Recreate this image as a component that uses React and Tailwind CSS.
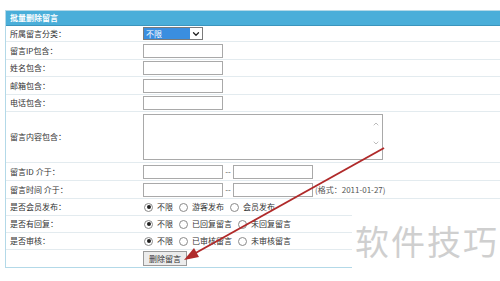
import { ChevronDown, ChevronUp } from "lucide-react";

const rows = [
  { label: "所属留言分类：", h: "h-[16px]", kind: "select" },
  { label: "留言IP包含：", h: "h-[18px]", kind: "input" },
  { label: "姓名包含：", h: "h-[17px]", kind: "input" },
  { label: "邮箱包含：", h: "h-[18px]", kind: "input" },
  { label: "电话包含：", h: "h-[17px]", kind: "input" },
  { label: "留言内容包含：", h: "h-[51px]", kind: "textarea" },
  { label: "留言ID 介于：", h: "h-[18px]", kind: "range" },
  { label: "留言时间 介于：", h: "h-[18px]", kind: "date" },
  { label: "是否会员发布：", h: "h-[17px]", kind: "radio", opts: ["不限", "游客发布", "会员发布"] },
  { label: "是否有回复：", h: "h-[17px]", kind: "radio", opts: ["不限", "已回复留言", "未回复留言"] },
  { label: "是否审核：", h: "h-[17px]", kind: "radio", opts: ["不限", "已审核留言", "未审核留言"] },
];

function Box({ w = "w-[80px]" }) {
  return <div className={`${w} h-[14px] border border-[#a9a9a9] bg-white`} />;
}

function Radio({ on }) {
  return (
    <span className="w-[9px] h-[9px] rounded-full border border-[#8a8a8a] bg-white flex items-center justify-center">
      {on && <span className="w-[4px] h-[4px] rounded-full bg-[#222]" />}
    </span>
  );
}

function Field({ row }) {
  switch (row.kind) {
    case "select":
      return (
        <div className="flex w-[60px] h-[13px] border border-[#7a7a7a] bg-white">
          <div className="flex-1 bg-[#3a8ee0] text-white text-[8px] leading-[11px] pl-[2px]">不限</div>
          <div className="w-[12px] flex items-center justify-center">
            <ChevronDown size={10} strokeWidth={3} color="#222" />
          </div>
        </div>
      );
    case "input":
      return <Box />;
    case "textarea":
      return (
        <div className="relative w-[240px] h-[46px] border border-[#a9a9a9] bg-white">
          <div className="absolute right-[2px] top-[5px] flex flex-col gap-[11px] text-[#9a9a9a]">
            <ChevronUp size={8} strokeWidth={2} />
            <ChevronDown size={8} strokeWidth={2} />
          </div>
        </div>
      );
    case "range":
    case "date":
      return (
        <div className="flex items-center">
          <Box />
          <span className="w-[10px] text-center text-[8px] text-[#555]">--</span>
          <Box />
          {row.kind === "date" && (
            <span className="ml-[2px] text-[8px] text-[#555]">(格式：2011-01-27)</span>
          )}
        </div>
      );
    case "radio":
      return (
        <div className="flex items-center pl-[1px] text-[8px] text-[#333]">
          {row.opts.map((o, i) => (
            <span key={o} className="flex items-center gap-[4px] mr-[6px]">
              <Radio on={i === 0} />
              <span>{o}</span>
            </span>
          ))}
        </div>
      );
    default:
      return null;
  }
}

export default function App() {
  return (
    <div
      className="relative w-[500px] h-[281px] overflow-hidden bg-white pt-[10px] pl-[5px]"
      style={{ fontFamily: '"Noto Sans CJK SC", "Noto Sans", sans-serif' }}
    >
      <div className="border-l border-t border-b border-[#b3d9e8] w-[510px]">
        <div className="h-[15px] bg-[#4aaed9] border-b border-[#3b95bd] text-white text-[8px] font-bold leading-[14px] pl-[4px]">
          批量删除留言
        </div>
        {rows.map((r) => (
          <div key={r.label} className={`flex items-center ${r.h} border-b border-[#e3ebef]`}>
            <div className="w-[137px] pl-[4px] text-[8px] text-[#333]">{r.label}</div>
            <Field row={r} />
          </div>
        ))}
        <div className="flex items-center h-[17px]">
          <div className="w-[137px]" />
          <button className="w-[44px] h-[15px] border border-[#9a9a9a] bg-[#ececec] text-[8px] text-[#333] leading-[13px]">
            删除留言
          </button>
        </div>
      </div>

      <div className="absolute left-[352px] top-[200px] w-[150px] h-[81px] bg-white flex items-center justify-center">
        <span className="text-[34px] text-[#cfcfcf] tracking-[2px]">软件技巧</span>
      </div>

      <svg className="absolute left-0 top-0" width="500" height="281">
        <line x1="384" y1="148" x2="192" y2="255" stroke="#b02a2a" strokeWidth="2" />
        <polygon points="184,260 194,248 199,257" fill="#b02a2a" />
      </svg>
    </div>
  );
}
